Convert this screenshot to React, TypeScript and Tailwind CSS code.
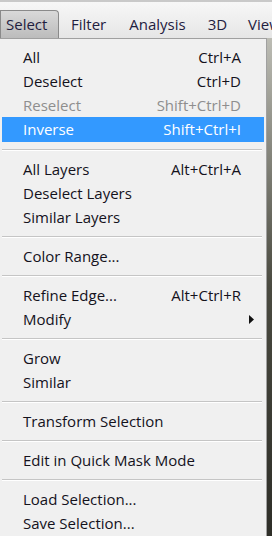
import { Fragment } from 'react';

type Item = { label: string; shortcut?: string; disabled?: boolean; active?: boolean; submenu?: boolean };

const groups: Item[][] = [
  [
    { label: 'All', shortcut: 'Ctrl+A' },
    { label: 'Deselect', shortcut: 'Ctrl+D' },
    { label: 'Reselect', shortcut: 'Shift+Ctrl+D', disabled: true },
    { label: 'Inverse', shortcut: 'Shift+Ctrl+I', active: true },
  ],
  [
    { label: 'All Layers', shortcut: 'Alt+Ctrl+A' },
    { label: 'Deselect Layers' },
    { label: 'Similar Layers' },
  ],
  [{ label: 'Color Range...' }],
  [
    { label: 'Refine Edge...', shortcut: 'Alt+Ctrl+R' },
    { label: 'Modify', submenu: true },
  ],
  [{ label: 'Grow' }, { label: 'Similar' }],
  [{ label: 'Transform Selection' }],
  [{ label: 'Edit in Quick Mask Mode' }],
  [{ label: 'Load Selection...' }, { label: 'Save Selection...' }],
];

function MenuRow({ item }: { item: Item }) {
  const color = item.active
    ? 'bg-[#3399ff] text-white h-[25px]'
    : item.disabled
      ? 'text-[#8e8e8e] h-[24px]'
      : 'text-[#14121c] h-[24px]';
  return (
    <div className={`flex items-center pl-[21px] pr-[23px] mx-[2px] ${color}`}>
      <span className="flex-1">{item.label}</span>
      {item.shortcut && <span>{item.shortcut}</span>}
      {item.submenu && (
        <svg width="5" height="9" viewBox="0 0 5 9" className="-mr-[13px]">
          <path d="M0 0 L5 4.5 L0 9 Z" fill="#111" />
        </svg>
      )}
    </div>
  );
}

export default function App() {
  return (
    <div
      className="w-[272px] h-[536px] overflow-hidden flex flex-col text-[15px] leading-none"
      style={{ fontFamily: '"Open Sans", "Noto Sans", sans-serif' }}
    >
      <div className="h-[38px] flex items-end border-t-2 border-[#c9c9c9] bg-gradient-to-b from-[#f7f7f7] to-[#e6e6e6] text-[#1f2040]">
        <div className="shrink-0 w-[59px] h-[28px] flex items-center pl-[5px] border border-b-0 border-[#8a8a8a] rounded-tr-[4px] bg-gradient-to-b from-[#d9d9d9] to-[#bcbcbc]">
          Select
        </div>
        <div className="h-[28px] min-w-0 flex items-center overflow-hidden whitespace-nowrap">
          <span className="ml-[12px]">Filter</span>
          <span className="ml-[23px]">Analysis</span>
          <span className="ml-[22px]">3D</span>
          <span className="ml-[21px]">View</span>
        </div>
      </div>
      <div className="flex flex-1">
        <div className="w-[267px] bg-[#f0f0f0] border-r border-t border-[#a0a0a0] pt-[6px]">
          {groups.map((g, i) => (
            <Fragment key={i}>
              {i > 0 && (
                <div className="h-[15px] flex items-center pl-[2px] pr-[4px]">
                  <div className="h-[2px] w-full bg-[#c5c5c5] border-b border-white" />
                </div>
              )}
              {g.map((item) => (
                <MenuRow key={item.label} item={item} />
              ))}
            </Fragment>
          ))}
        </div>
        <div className="flex-1 bg-gradient-to-b from-[#bdbdb5] via-[#4a4a40] to-[#2e2e28]" />
      </div>
    </div>
  );
}
